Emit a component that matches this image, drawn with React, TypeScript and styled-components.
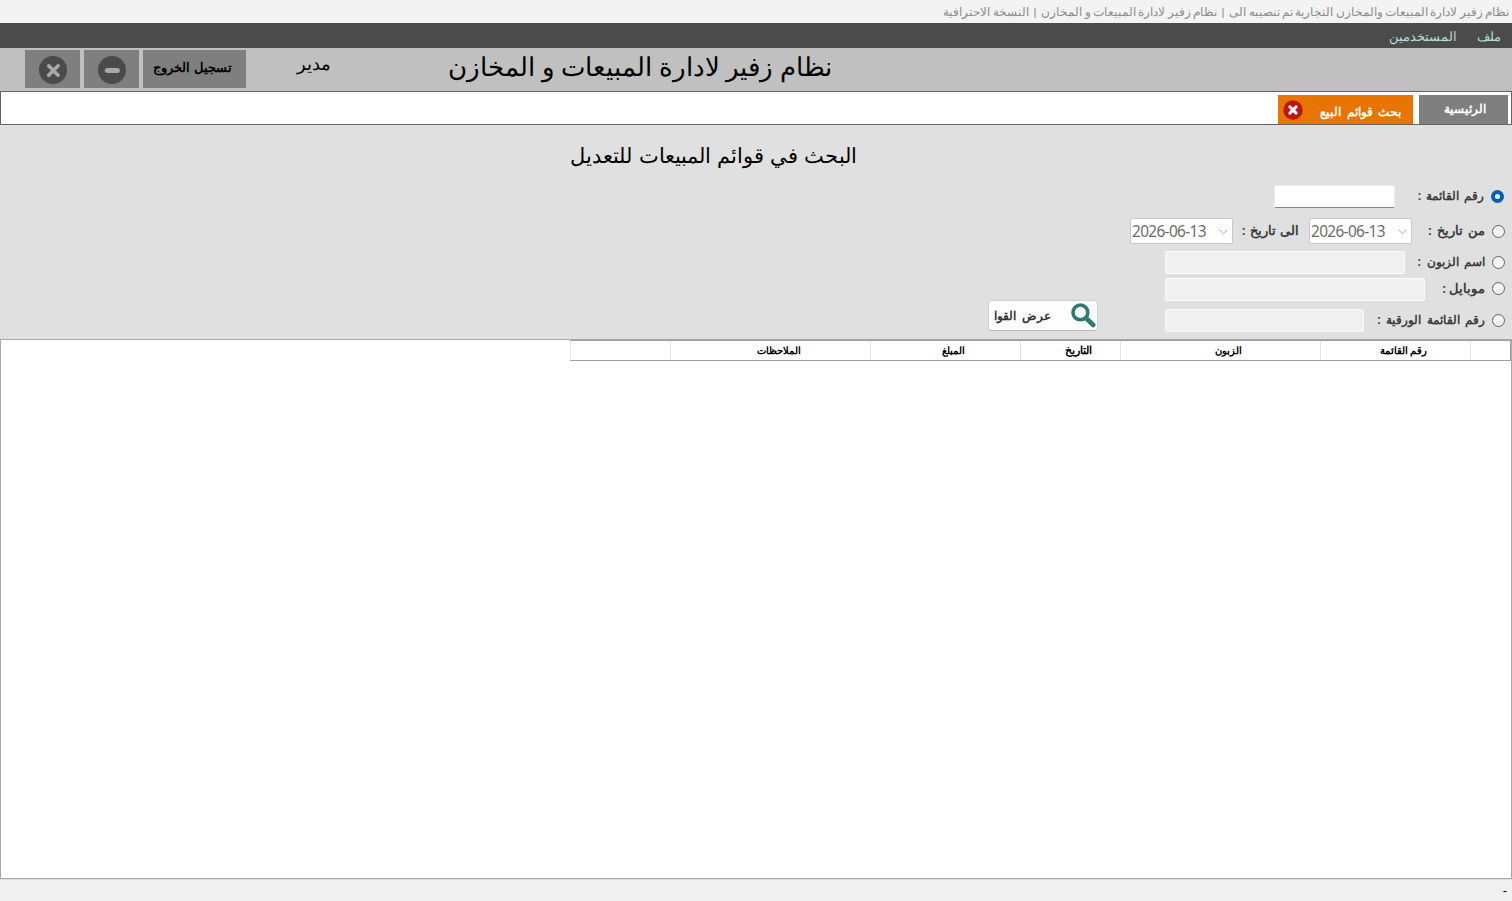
import React from "react";
import styled, { createGlobalStyle } from "styled-components";

const GlobalStyle = createGlobalStyle`
  *, *::before, *::after { box-sizing: border-box; }
  body {
    margin: 0;
    overflow: hidden;
    font-family: "Liberation Sans", sans-serif;
    color: #000;
  }
`;

const Window = styled.div`
  display: flex;
  flex-direction: column;
  width: 1512px;
  height: 901px;
  background: #e0e0e0;
  white-space: nowrap;
`;

const TitleBar = styled.header`
  flex: none;
  height: 23px;
  padding: 0 3px;
  background: #f3f3f3;
  color: #8c8c8c;
  font-size: 11.6px;
  word-spacing: -0.88px;
  line-height: 24px;
  white-space: pre;
`;

const MenuBar = styled.nav`
  flex: none;
  display: flex;
  gap: 20px;
  height: 25px;
  padding: 0 11px;
  background: #4b4b4b;
  color: #b4dcd8;
  font-size: 12.7px;
  line-height: 28px;
`;

const Header = styled.div`
  flex: none;
  display: flex;
  align-items: flex-start;
  height: 43px;
  padding: 2px 680px 0 25px;
  background: #c0c0c0;
`;

const AppTitle = styled.h1`
  width: 384px;
  margin: 0;
  font-size: 25.6px;
  font-weight: 400;
  word-spacing: -0.5px;
  line-height: 35px;
`;

const UserName = styled.div`
  width: 35px;
  margin-right: 117px;
  font-size: 18.3px;
  line-height: 27px;
`;

const HeaderActions = styled.div`
  display: flex;
  gap: 4px;
  margin-right: auto;
`;

const HeaderButton = styled.button<{ $width: number }>`
  display: flex;
  align-items: center;
  justify-content: center;
  width: ${(p) => p.$width}px;
  height: 38px;
  padding: 0;
  border: 0;
  background: #7f7f7f;
  color: #000;
  font: bold 12.6px/36px "Liberation Sans", sans-serif;

  svg { margin: 2px 0 0; }
  span { margin: -2px 4px 0 0; }
`;

const TabStrip = styled.div`
  flex: none;
  display: flex;
  gap: 6px;
  height: 34px;
  padding: 3px 3px 0;
  border: 1px solid #646464;
  background: #fff;
`;

const Tab = styled.div<{ $active?: boolean }>`
  display: flex;
  align-items: center;
  justify-content: ${(p) => (p.$active ? "space-between" : "center")};
  width: ${(p) => (p.$active ? 135 : 89)}px;
  height: 29px;
  padding: ${(p) => (p.$active ? "4px 12px 0 5px" : "0 0 2px 2px")};
  background: ${(p) => (p.$active ? "#e87500" : "#7f7f7f")};
  color: #fff;
  font-size: 12.4px;
  font-weight: 700;
  word-spacing: 2px;

  svg { flex: none; margin-top: -3px; }
`;

const SearchPanel = styled.section`
  flex: none;
  height: 214px;
`;

const PanelTitle = styled.h2`
  height: 53px;
  margin: 0;
  padding: 14px 655px 0 0;
  font-size: 21px;
  font-weight: 400;
  word-spacing: 0.3px;
  line-height: 33px;
`;

const CriteriaRow = styled.div<{ $height: number }>`
  display: flex;
  align-items: center;
  height: ${(p) => p.$height}px;
  padding-right: 7px;
`;

const Radio = styled.span<{ $checked?: boolean }>`
  flex: none;
  width: 13px;
  height: 13px;
  margin-right: ${(p) => (p.$checked ? 1 : 0)}px;
  border: ${(p) => (p.$checked ? "4px solid #005fb8" : "1px solid #626262")};
  border-radius: 50%;
  background: ${(p) => (p.$checked ? "#fff" : "#f3f3f3")};
`;

const CriteriaLabel = styled.label<{ $width: number; $inset?: number; $size?: number; $gap?: number }>`
  flex: none;
  width: ${(p) => p.$width}px;
  padding-right: ${(p) => p.$inset ?? 7}px;
  color: #3c3c3c;
  font-size: ${(p) => p.$size ?? 12}px;
  font-weight: 700;
  word-spacing: ${(p) => p.$gap ?? 1}px;
  line-height: 20px;
`;

const TextInput = styled.input<{ $width: number }>`
  width: ${(p) => p.$width}px;
  height: 23px;
  margin: 1px 0 0;
  padding: 0 4px;
  border: 1px solid #ececec;
  border-bottom-color: #868686;
  border-radius: 2px;
  background: #fff;
  outline: 0;

  &:disabled {
    border: 1px solid #fafafa;
    background: #f0f0f0;
  }
`;

const DateBox = styled.div`
  display: flex;
  align-items: center;
  justify-content: space-between;
  width: 103px;
  height: 26px;
  padding: 1px 4px 0 1px;
  border: 1px solid #c8c8c8;
  border-radius: 2px;
  background: #fff;
  color: #6d6d6d;
  direction: ltr;
`;

const DateValue = styled.span`
  width: 75px;
  font-family: "Noto Sans", sans-serif;
  font-size: 15.4px;
  letter-spacing: -0.65px;
  line-height: 22px;
`;

const ShowButton = styled.button`
  display: flex;
  align-items: center;
  align-self: flex-start;
  justify-content: space-between;
  width: 110px;
  height: 31px;
  margin: -1px 67px 0 0;
  padding: 0 1px 0 5px;
  border: 1px solid #cfcfcf;
  border-bottom-color: #b9b9b9;
  border-radius: 4px;
  background: #fdfdfd;
  color: #333;
  font: bold 12.4px "Liberation Sans", sans-serif;
  word-spacing: 3px;

  svg { flex: none; }
`;

const Results = styled.section`
  flex: none;
  height: 540px;
  border: 1px solid #a9a9ab;
  background: #fff;
`;

const ResultsHeader = styled.div`
  display: grid;
  grid-template-columns: 41px 150px 200px 100px 150px 200px 100px;
  width: 941px;
  height: 21px;
  border: solid #a0a0a0;
  border-width: 1px 0 1px 0;
`;

const HeaderCell = styled.div<{ $size?: number }>`
  padding: 0 0 0 16px;
  border-left: 1px solid #e3e3e3;
  font-size: ${(p) => p.$size ?? 10.4}px;
  font-weight: 700;
  line-height: 19px;
  text-align: center;

  &:first-child {
    border-right: 1px solid #a0a0a0;
  }
`;

const StatusBar = styled.footer`
  flex: 1;
  padding: 0 5px;
  border-top: 1px solid #dcdcdc;
  background: #f0f0f0;
  font-size: 13px;
  line-height: 21px;
`;

const MinimizeIcon = () => (
  <svg width="28" height="28" viewBox="0 0 28 28">
    <circle cx="14" cy="14" r="14" fill="#4b4b4b" />
    <path d="M9.3 14.5h10" stroke="#a9a9a9" strokeWidth="5" strokeLinecap="round" />
  </svg>
);

const CloseIcon = () => (
  <svg width="28" height="28" viewBox="0 0 28 28">
    <circle cx="14" cy="14" r="14" fill="#4b4b4b" />
    <path d="M9.7 9.8l9.4 9.4M19.1 9.8l-9.4 9.4" stroke="#a9a9a9" strokeWidth="3.6" strokeLinecap="round" />
  </svg>
);

const TabCloseIcon = () => (
  <svg width="20" height="20" viewBox="0 0 20 20">
    <circle cx="10" cy="10" r="9.7" fill="#bd1414" />
    <path d="M6.9 6.9l6.2 6.2M13.1 6.9l-6.2 6.2" stroke="#fff" strokeWidth="3" strokeLinecap="round" />
  </svg>
);

const SearchIcon = () => (
  <svg width="25" height="25" viewBox="0 0 25 25">
    <circle cx="9.4" cy="9.4" r="7.4" fill="none" stroke="#2d7a73" strokeWidth="3.6" />
    <path d="M15 15l7.2 7" stroke="#2d7a73" strokeWidth="4.6" strokeLinecap="round" />
  </svg>
);

const Chevron = () => (
  <svg width="9" height="6" viewBox="0 0 9 6">
    <path d="M.5 .7l4 4 4-4" fill="none" stroke="#a8a8a8" />
  </svg>
);

const DatePicker = ({ value }: { value: string }) => (
  <DateBox>
    <DateValue>{value}</DateValue>
    <Chevron />
  </DateBox>
);

const columns = [
  { name: "" },
  { name: "رقم القائمة" },
  { name: "الزبون" },
  { name: "التاريخ", size: 11.4 },
  { name: "المبلغ" },
  { name: "الملاحظات", size: 10 },
  { name: "" },
];

export default function App() {
  return (
    <Window dir="rtl">
      <GlobalStyle />
      <TitleBar>
        {"نظام زفير لادارة المبيعات والمخازن التجارية تم تنصيبه الى  |  نظام زفير لادارة المبيعات و المخازن  |  النسخة الاحترافية"}
      </TitleBar>
      <MenuBar>
        <span>ملف</span>
        <span>المستخدمين</span>
      </MenuBar>
      <Header>
        <AppTitle>نظام زفير لادارة المبيعات و المخازن</AppTitle>
        <UserName>مدير</UserName>
        <HeaderActions>
          <HeaderButton $width={103}><span>تسجيل الخروج</span></HeaderButton>
          <HeaderButton $width={55} aria-label="تصغير"><MinimizeIcon /></HeaderButton>
          <HeaderButton $width={55} aria-label="إغلاق"><CloseIcon /></HeaderButton>
        </HeaderActions>
      </Header>
      <TabStrip>
        <Tab>الرئيسية</Tab>
        <Tab $active>
          <span>بحث قوائم البيع</span>
          <TabCloseIcon />
        </Tab>
      </TabStrip>
      <SearchPanel>
        <PanelTitle>البحث في قوائم المبيعات للتعديل</PanelTitle>
        <CriteriaRow $height={36}>
          <Radio $checked />
          <CriteriaLabel $width={96} $gap={1.4}>رقم القائمة :</CriteriaLabel>
          <TextInput $width={121} />
        </CriteriaRow>
        <CriteriaRow $height={34}>
          <Radio />
          <CriteriaLabel $width={80} $size={13} $gap={1.4}>من تاريخ :</CriteriaLabel>
          <DatePicker value="2026-06-13" />
          <CriteriaLabel $width={76} $inset={10} $size={13} $gap={0.5}>الى تاريخ :</CriteriaLabel>
          <DatePicker value="2026-06-13" />
        </CriteriaRow>
        <CriteriaRow $height={28}>
          <Radio />
          <CriteriaLabel $width={87} $gap={2}>اسم الزبون :</CriteriaLabel>
          <TextInput $width={240} disabled />
        </CriteriaRow>
        <CriteriaRow $height={25}>
          <Radio />
          <CriteriaLabel $width={67} $size={13} $gap={-1}>موبايل :</CriteriaLabel>
          <TextInput $width={260} disabled />
        </CriteriaRow>
        <CriteriaRow $height={38}>
          <Radio />
          <CriteriaLabel $width={128} $gap={2}>رقم القائمة الورقية :</CriteriaLabel>
          <TextInput $width={199} disabled />
          <ShowButton>
            <SearchIcon />
            <span>عرض القوا</span>
          </ShowButton>
        </CriteriaRow>
      </SearchPanel>
      <Results>
        <ResultsHeader>
          {columns.map((column, i) => (
            <HeaderCell key={i} $size={column.size}>{column.name}</HeaderCell>
          ))}
        </ResultsHeader>
      </Results>
      <StatusBar>-</StatusBar>
    </Window>
  );
}
